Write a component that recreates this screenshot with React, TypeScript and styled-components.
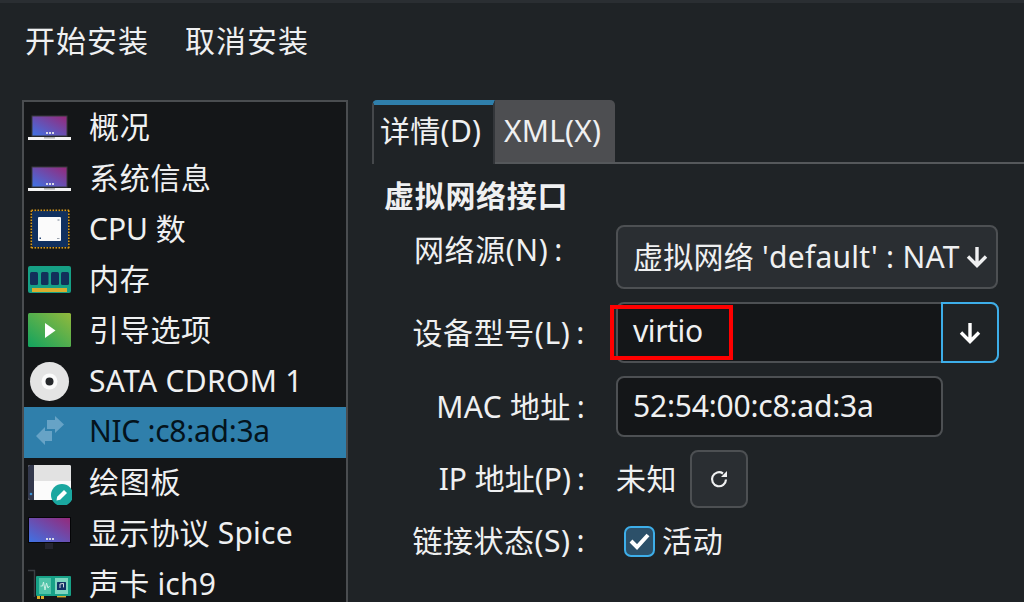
import React from "react";
import styled, { createGlobalStyle } from "styled-components";

const Global = createGlobalStyle`
  html, body { margin: 0; padding: 0; background: #1f2326; overflow: hidden; }
  #root { width: 1024px; height: 602px; overflow: hidden; }
  * { box-sizing: border-box; }
`;

const Page = styled.div`
  width: 1024px; height: 602px; background: #1f2326; color: #eff0f1; overflow: hidden;
  font-family: "Noto Sans", "Noto Sans CJK SC", sans-serif; font-size: 30px; line-height: 40px;
  border-top: 3px solid #2a2e32;
  display: flex; flex-direction: column;
`;
const Menu = styled.div`
  height: 97px; display: flex; gap: 36px; padding: 18px 0 0 25px; flex: none;
`;
const MenuItem = styled.span`
  display: block; letter-spacing: 1px; height: 40px;
`;
const Main = styled.div`
  display: flex; flex: 1; min-height: 0; padding-left: 22px; gap: 24px;
`;
const Sidebar = styled.div`
  width: 326px; height: 540px; flex: none; background: #141618; border: 2px solid #4a4d50; border-bottom: none;
  padding-top: 1px;
`;
const Row = styled.div<{ $sel?: boolean }>`
  height: 50.7px; display: flex; align-items: center; padding-left: 4px; gap: 17px;
  background: ${p => (p.$sel ? "#2f7fab" : "transparent")};
  color: ${p => (p.$sel ? "#04131c" : "#eff0f1")};
  white-space: nowrap;
`;
const IconBox = styled.svg`
  width: 44px; height: 44px; flex: none; display: block;
`;
const RowLabel = styled.span<{ $ls: number }>`
  display: block; margin-top: -2px; letter-spacing: ${p => p.$ls}px;
`;
const Right = styled.div`
  flex: 1; min-width: 0; display: flex; flex-direction: column;
`;
const Tabs = styled.div`
  display: flex; height: 64px; flex: none; border-bottom: 2px solid #55585b; margin-right: -2px;
`;
const Tab = styled.div<{ $active?: boolean }>`
  height: ${p => (p.$active ? "64px" : "62px")}; width: ${p => (p.$active ? "123px" : "120px")};
  background: ${p => (p.$active ? "#1f2326" : "#4d4e51")};
  border-radius: ${p => (p.$active ? "5px 0 0 0" : "0 5px 0 0")};
  border-left: ${p => (p.$active ? "2px solid #45484b" : "none")};
  border-right: ${p => (p.$active ? "2px solid #33363a" : "none")};
  border-top: ${p => (p.$active ? "5px solid #2f7fab" : "none")};
  padding: ${p => (p.$active ? "6px 0 0 6px" : "11px 0 0 9px")};
  letter-spacing: ${p => (p.$active ? "0.3px" : "0.2px")};
  white-space: nowrap;
`;
const Heading = styled.div`
  font-weight: 700; font-size: 30px; letter-spacing: 0.7px; margin: 12px 0 0 12px; height: 40px;
`;
const Form = styled.div`
  display: grid; grid-template-columns: 214px 1fr; column-gap: 30px; row-gap: 13px; margin-top: 9px; align-items: center;
`;
const Label = styled.div<{ $raised?: boolean; $ls: number }>`
  display: flex; justify-content: flex-end; white-space: nowrap; letter-spacing: ${p => p.$ls}px;
  margin-right: ${p => (p.$raised ? "22px" : "0")};
  margin-bottom: ${p => (p.$raised ? "15px" : "0")};
`;
const Colon = styled.span`
  margin-left: 6px; margin-right: 1px;
`;
const Control = styled.div<{ $h: number; $w: number }>`
  position: relative; height: ${p => p.$h}px; width: ${p => p.$w}px;
`;
const ComboBtn = styled.div`
  height: 100%; background: #2a2e32; border: 2px solid #4d5053; border-radius: 8px;
  display: flex; align-items: center; justify-content: space-between; padding: 0 8px 0 15px; white-space: nowrap;
  letter-spacing: 0.25px;
`;
const ComboEdit = styled.div`
  height: 100%; display: flex; background: #141618; border: 2px solid #4d5053; border-radius: 8px;
`;
const EditText = styled.div`
  flex: 1; padding-left: 15px; line-height: 54px; letter-spacing: -0.4px;
`;
const ArrowCell = styled.div`
  width: 58px; margin: -2px -2px -2px 0; border: 2px solid #3daee9; border-radius: 0 8px 8px 0;
  display: flex; align-items: center; justify-content: center; background: #1f2326;
`;
const Input = styled.div`
  height: 100%; background: #141618; border: 2px solid #4d5053; border-radius: 8px; padding-left: 15px; line-height: 56px;
  letter-spacing: -0.2px;
`;
const RedBox = styled.div`
  position: absolute; left: -6px; top: 3px; width: 123px; height: 55px; border: 4px solid #ff0000; pointer-events: none;
`;
const IpLine = styled.div`
  display: flex; align-items: center; gap: 13px; height: 58px; letter-spacing: 0.4px;
`;
const RefreshBtn = styled.div`
  width: 58px; height: 58px; background: #2a2e32; border: 2px solid #4d5053; border-radius: 8px;
  display: flex; align-items: center; justify-content: center;
`;
const CheckLine = styled.div`
  display: flex; align-items: center; gap: 7px; height: 40px; padding-left: 8px; letter-spacing: 0.7px;
`;
const Check = styled.div`
  width: 31px; height: 31px; border: 2px solid #3daee9; border-radius: 7px; background: #2c5069;
  display: flex; align-items: center; justify-content: center;
`;

const Dots = ({ y }: { y: number }) => (
  <g fill="#d8d8e6">
    <rect x="18" y={y} width="2" height="2" />
    <rect x="21" y={y} width="2" height="2" />
    <rect x="24" y={y} width="2" height="2" />
  </g>
);
const Grad = ({ id }: { id: string }) => (
  <defs>
    <linearGradient id={id} x1="0" y1="1" x2="1" y2="0">
      <stop offset="0" stopColor="#3f72e4" />
      <stop offset="1" stopColor="#96297a" />
    </linearGradient>
  </defs>
);

const Laptop = () => (
  <IconBox viewBox="0 0 44 44">
    <Grad id="lg" />
    <rect x="3.5" y="9.5" width="36" height="21" fill="#3a3a40" />
    <rect x="4.5" y="10.5" width="34" height="19" fill="url(#lg)" />
    <Dots y={26} />
    <rect x="0" y="31" width="43" height="3" fill="#f4f4f4" />
    <rect x="16" y="31" width="11" height="1.6" fill="#b4b4b4" />
  </IconBox>
);
const Cpu = () => {
  const dots = Array.from({ length: 13 }, (_, i) => 3.5 + i * 3);
  return (
    <IconBox viewBox="0 0 44 44">
      <rect x="4" y="3" width="36" height="36" rx="1.5" fill="#10305f" />
      {dots.map(d => (
        <g key={d} fill="#d79a1c">
          <rect x={d} y="1.5" width="1.6" height="1.6" />
          <rect x={d} y="39" width="1.6" height="1.6" />
          <rect x="2.5" y={d - 1} width="1.6" height="1.6" />
          <rect x="40" y={d - 1} width="1.6" height="1.6" />
        </g>
      ))}
      <rect x="10" y="9" width="23" height="24" rx="1" fill="#fbfbfb" />
      <rect x="11.5" y="29.5" width="1.5" height="1.5" fill="#2a4a7a" />
      <rect x="29" y="30" width="2.5" height="1" fill="#9aa2ad" />
      <rect x="29.5" y="11" width="2" height="2" fill="#b8bec6" />
    </IconBox>
  );
};
const Ram = () => (
  <IconBox viewBox="0 0 44 44">
    <rect x="0" y="8" width="43" height="27" rx="2" fill="#16a085" />
    {[
      [2, 8],
      [13, 7.5],
      [23, 8],
      [33, 8],
    ].map(([x, w]) => (
      <rect key={x} x={x} y="14" width={w} height="13" rx="1.5" fill="#12305a" />
    ))}
    <rect x="4" y="30" width="35" height="4" fill="#d8ae2e" />
  </IconBox>
);
const Boot = () => (
  <IconBox viewBox="0 0 44 44">
    <defs>
      <linearGradient id="bg" x1="0" y1="1" x2="1" y2="0">
        <stop offset="0" stopColor="#11a35f" />
        <stop offset="1" stopColor="#93b93c" />
      </linearGradient>
    </defs>
    <rect x="0" y="4" width="43" height="34" rx="1.5" fill="url(#bg)" />
    <path d="M17 14 L27.5 21.5 L17 29 Z" fill="#fff" />
  </IconBox>
);
const Disc = () => (
  <IconBox viewBox="0 0 44 44">
    <circle cx="21.5" cy="21.5" r="19.5" fill="#e4e4e4" />
    <circle cx="21.5" cy="21.5" r="8" fill="#fbfbfb" />
    <circle cx="21.5" cy="21.5" r="4" fill="#26282b" />
  </IconBox>
);
const Nic = () => (
  <IconBox viewBox="0 0 44 44">
    <path d="M19 10 H27 V6 L36 14.5 L27 23 V19 H19 Z" fill="#67a3c6" />
    <path d="M24 21 H17 V17 L8 26 L17 35 V31 H24 Z" fill="#67a3c6" />
  </IconBox>
);
const Board = () => (
  <IconBox viewBox="0 0 44 44">
    <rect x="0" y="4" width="43" height="35" rx="2" fill="#fbfbfb" />
    <path d="M6 4 H41 A2 2 0 0 1 43 6 V20 H6 Z" fill="#e2e2e2" />
    <path d="M2 4 H6 V39 H2 A2 2 0 0 1 0 37 V6 A2 2 0 0 1 2 4 Z" fill="#33384c" />
    <circle cx="3" cy="33" r="1.3" fill="#3b8fd0" />
    <circle cx="34" cy="34" r="11" fill="#1aa7a0" />
    <path d="M28.5 39.5 L29.2 35.8 L36 29 L39 32 L32.2 38.8 Z" fill="#fff" />
  </IconBox>
);
const Display = () => (
  <IconBox viewBox="0 0 44 44">
    <Grad id="dg" />
    <path d="M17 31 H25 V37 L17 37 Z" fill="#24242e" />
    <rect x="0" y="5" width="43" height="26" fill="#050507" />
    <rect x="1" y="6" width="41" height="24" fill="url(#dg)" />
    <Dots y={26} />
  </IconBox>
);
const Sound = () => (
  <IconBox viewBox="0 0 44 44">
    <path d="M0 7.5 H6.5 V34" stroke="#3b3f44" strokeWidth="1.4" fill="none" />
    <rect x="8" y="13" width="35" height="20" rx="1" fill="#17a187" />
    <rect x="11" y="15" width="12" height="16" fill="#4fc3a8" />
    <path d="M12.5 23 L14.5 23 L15.5 19 L17 27 L18.5 20 L20 25 L21.5 23" stroke="#c8efe4" strokeWidth="1" fill="none" />
    <rect x="27" y="15" width="13" height="16" fill="#7fd6c0" />
    <rect x="29" y="19" width="9" height="8" rx="0.5" fill="#123266" />
    <path d="M32 25 V21 L35.5 20.4 V24.4" stroke="#e8e8e8" strokeWidth="0.9" fill="none" />
    <rect x="9" y="33" width="3" height="3" fill="#d8ae2e" />
    <rect x="13" y="33" width="3" height="3" fill="#d8ae2e" />
    <rect x="29" y="33" width="9" height="1.4" fill="#d8ae2e" />
  </IconBox>
);
const Down = ({ light }: { light?: boolean }) => (
  <svg width="22" height="22" viewBox="0 0 22 22" fill="none" stroke={light ? "#fff" : "#eff0f1"} strokeWidth="3.4">
    <path d="M11 1 V19 M2 10.5 L11 19.5 L20 10.5" />
  </svg>
);

const items: [React.ReactNode, string, number][] = [
  [<Laptop />, "概况", 0.7],
  [<Laptop />, "系统信息", 0.7],
  [<Cpu />, "CPU 数", 0],
  [<Ram />, "内存", 0.7],
  [<Boot />, "引导选项", 0.7],
  [<Disc />, "SATA CDROM 1", 0.3],
  [<Nic />, "NIC :c8:ad:3a", -0.3],
  [<Board />, "绘图板", 0.7],
  [<Display />, "显示协议 Spice", 0.2],
  [<Sound />, "声卡 ich9", 0.2],
];

export default function App() {
  return (
    <Page>
      <Global />
      <Menu>
        <MenuItem>开始安装</MenuItem>
        <MenuItem>取消安装</MenuItem>
      </Menu>
      <Main>
        <Sidebar>
          {items.map(([icon, label, ls]) => (
            <Row key={label} $sel={label.startsWith("NIC")}>
              {icon}
              <RowLabel $ls={ls}>{label}</RowLabel>
            </Row>
          ))}
        </Sidebar>
        <Right>
          <Tabs>
            <Tab $active>详情(D)</Tab>
            <Tab>XML(X)</Tab>
          </Tabs>
          <Heading>虚拟网络接口</Heading>
          <Form>
            <Label $raised $ls={0.6}>网络源(N)<Colon>:</Colon></Label>
            <Control $h={64} $w={382}>
              <ComboBtn>
                虚拟网络 'default' : NAT
                <Down />
              </ComboBtn>
            </Control>
            <Label $ls={0.6}>设备型号(L)<Colon>:</Colon></Label>
            <Control $h={61} $w={383}>
              <ComboEdit>
                <EditText>virtio</EditText>
                <ArrowCell>
                  <Down light />
                </ArrowCell>
              </ComboEdit>
              <RedBox />
            </Control>
            <Label $ls={0.3}>MAC 地址<Colon>:</Colon></Label>
            <Control $h={61} $w={327}>
              <Input>52:54:00:c8:ad:3a</Input>
            </Control>
            <Label $ls={0}>IP 地址(P)<Colon>:</Colon></Label>
            <IpLine>
              未知
              <RefreshBtn>
                <svg width="20" height="20" viewBox="0 0 20 20" fill="none" stroke="#eff0f1" strokeWidth="2.2">
                  <path d="M17 10.5 A7 7 0 1 1 14 4.5" />
                  <path d="M18 2 V8 H12 Z" fill="#eff0f1" stroke="none" />
                </svg>
              </RefreshBtn>
            </IpLine>
            <Label $ls={0.5}>链接状态(S)<Colon>:</Colon></Label>
            <CheckLine>
              <Check>
                <svg width="21" height="18" viewBox="0 0 21 18" fill="none" stroke="#fff" strokeWidth="4">
                  <path d="M2 9 L8 15 L19 3" />
                </svg>
              </Check>
              活动
            </CheckLine>
          </Form>
        </Right>
      </Main>
    </Page>
  );
}
